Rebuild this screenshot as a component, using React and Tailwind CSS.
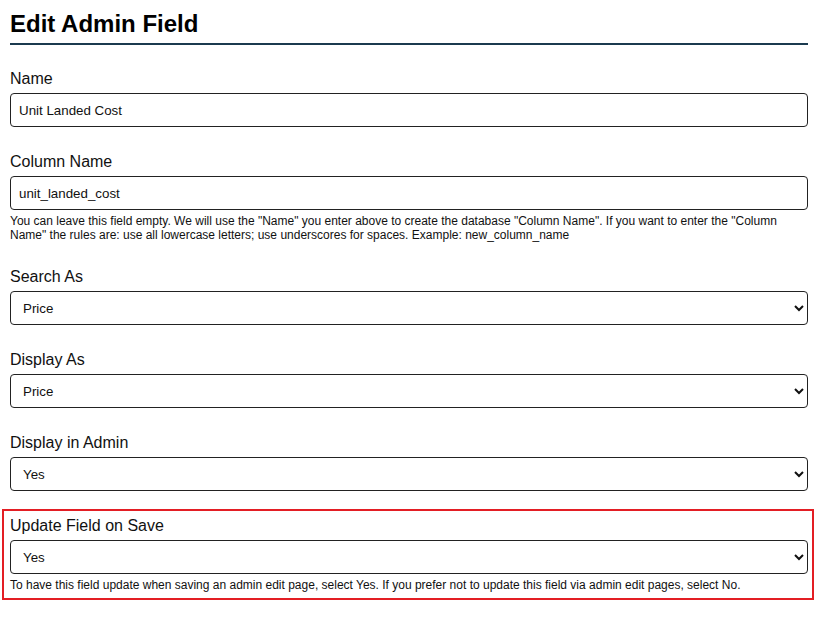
import React, { useState } from 'react';

const inputClass =
  'block w-full h-[34px] border border-[#222] rounded-[4px] bg-white px-[8px] text-[13.333px] text-[#111] outline-none';

const Field = ({ label, className = 'mt-[24px]', children, help }) => (
  <div className={className}>
    <label className="block text-[16px] leading-[22px] mb-[3px] text-[#111]">{label}</label>
    {children}
    {help && <p className="mt-[4px] text-[12px] leading-[14px] text-[#111]">{help}</p>}
  </div>
);

const SelectField = ({ value, onChange, options }) => (
  <select className={inputClass} value={value} onChange={(e) => onChange(e.target.value)}>
    {options.map((o) => (
      <option key={o} value={o}>{o}</option>
    ))}
  </select>
);

export default function App() {
  const [name, setName] = useState('Unit Landed Cost');
  const [column, setColumn] = useState('unit_landed_cost');
  const [searchAs, setSearchAs] = useState('Price');
  const [displayAs, setDisplayAs] = useState('Price');
  const [inAdmin, setInAdmin] = useState('Yes');
  const [onSave, setOnSave] = useState('Yes');

  const types = ['Text', 'Number', 'Price', 'Date', 'Yes/No'];

  return (
    <div className="min-h-screen bg-white px-[10px] pt-[10px] font-['Liberation_Sans',Arial,sans-serif] text-[#111]">
      <h1 className="text-[24px] leading-[28px] font-bold text-black pb-[5px] border-b-2 border-[#1b3a4f]">
        Edit Admin Field
      </h1>

      <Field label="Name" className="mt-[23px]">
        <input className={inputClass} value={name} onChange={(e) => setName(e.target.value)} />
      </Field>

      <Field
        label="Column Name"
        help={'You can leave this field empty. We will use the "Name" you enter above to create the database "Column Name". If you want to enter the "Column Name" the rules are: use all lowercase letters; use underscores for spaces. Example: new_column_name'}
      >
        <input className={inputClass} value={column} onChange={(e) => setColumn(e.target.value)} />
      </Field>

      <Field label="Search As">
        <SelectField value={searchAs} onChange={setSearchAs} options={types} />
      </Field>

      <Field label="Display As">
        <SelectField value={displayAs} onChange={setDisplayAs} options={types} />
      </Field>

      <Field label="Display in Admin">
        <SelectField value={inAdmin} onChange={setInAdmin} options={['Yes', 'No']} />
      </Field>

      {/* highlighted field */}
      <div className="mt-[18px] ml-[-8px] mr-[-6px] border-2 border-[#e31e24] pt-[4px] pb-[6px] pl-[6px] pr-[4px]">
        <Field
          label="Update Field on Save"
          className=""
          help="To have this field update when saving an admin edit page, select Yes. If you prefer not to update this field via admin edit pages, select No."
        >
          <SelectField value={onSave} onChange={setOnSave} options={['Yes', 'No']} />
        </Field>
      </div>
    </div>
  );
}
